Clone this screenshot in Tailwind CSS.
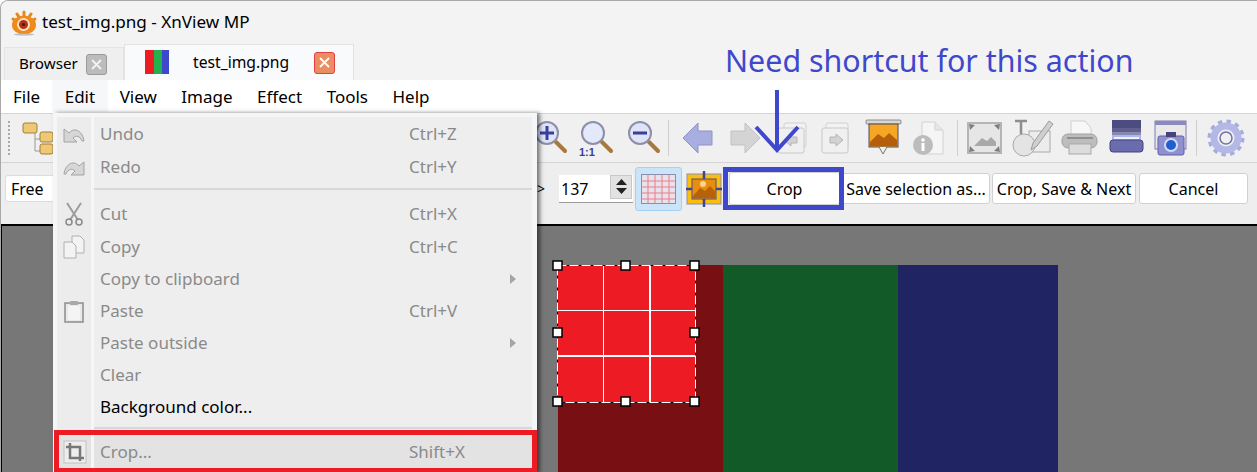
<!DOCTYPE html>
<html lang="en">
<head>
  <meta charset="UTF-8" />
  <title>test_img.png - XnView MP</title>
  <script src="https://cdn.jsdelivr.net/npm/@tailwindcss/browser@4"></script>
</head>
<body class="bg-white">
  <div class="relative w-[1257px] h-[472px] overflow-hidden flex flex-col text-[17px] text-black font-['Noto_Sans',sans-serif] bg-[#f3f3f3] border-l border-t border-[#a9a9a9] rounded-tl-lg">

    <!-- title bar -->
    <div class="h-[43px] shrink-0 flex items-center pl-[10px] gap-[5px] bg-[#f3f3f3]">
      <svg width="26" height="26" viewBox="0 0 26 26">
        <g stroke="#e8861c" stroke-width="3" stroke-linecap="round">
          <path d="M13 2v4M6 4l2 3M20 4l-2 3M2 9l3 2M24 9l-3 2" />
        </g>
        <ellipse cx="13" cy="15" rx="12" ry="9.5" fill="#ee8a1e" />
        <circle cx="12.5" cy="14.5" r="6.5" fill="#fbe3c0" />
        <circle cx="12.5" cy="14.5" r="4.5" fill="#b3301a" />
        <circle cx="12.5" cy="14.5" r="1.6" fill="#5c1208" />
        <ellipse cx="13" cy="24.5" rx="10" ry="1" fill="#bdbdbd" />
      </svg>
      <span class="leading-none mb-[2px] text-[17.1px]">test_img.png - XnView MP</span>
    </div>

    <!-- tabs -->
    <div class="h-[36px] shrink-0 flex items-end pl-[3px]">
      <div class="w-[120px] h-[33px] flex items-center pl-[14px] bg-[#efefef] border border-b-0 border-[#e4e4e4]">
        <span class="w-[67px] mb-[1px] text-[15.2px]">Browser</span>
        <span class="w-[21px] h-[21px] flex items-center justify-center rounded-[3px] bg-[#bcbcbc] border border-[#9a9a9a]">
          <svg width="11" height="11" viewBox="0 0 11 11"><path d="M1 1l9 9M10 1l-9 9" stroke="#f2f2f2" stroke-width="1.8" /></svg>
        </span>
      </div>
      <div class="w-[230px] h-[36px] flex items-center pl-[20px] bg-[#f9fafb] border border-b-0 border-[#e2e2e2]">
        <span class="flex w-[24px] h-[24px] mb-[2px]">
          <span class="w-[9px] bg-[#ed1c24]"></span>
          <span class="w-[8px] bg-[#22b14c]"></span>
          <span class="w-[7px] bg-[#3f48cc]"></span>
        </span>
        <span class="ml-[24px] mt-[1px] w-[121px] text-[15.7px]">test_img.png</span>
        <span class="w-[21px] h-[22px] flex items-center justify-center rounded-[3px] bg-[#ea8d63] border border-[#e0403f]">
          <svg width="11" height="11" viewBox="0 0 11 11"><path d="M1 1l9 9M10 1l-9 9" stroke="#fff" stroke-width="1.8" /></svg>
        </span>
      </div>
    </div>

    <!-- menu bar -->
    <div class="h-[33px] shrink-0 flex items-center bg-white pl-[12px] gap-[24.5px] text-[17px]">
      <span>File</span>
      <span class="relative">
        <span class="absolute left-[-13px] top-[-4px] w-[56px] h-[32px] bg-[#f5f7f9]"></span>
        <span class="relative">Edit</span>
      </span>
      <span>View</span>
      <span>Image</span>
      <span>Effect</span>
      <span>Tools</span>
      <span>Help</span>
    </div>

    <!-- main toolbar -->
    <div class="h-[50px] shrink-0 flex items-center bg-[#f0f0f0] border-t border-b border-[#d4d4d4] pl-[7px]">
      <span class="w-[3px] h-[34px] border-l-2 border-dotted border-[#a8a8a8]"></span>
      <svg class="ml-[10px]" width="32" height="38" viewBox="0 0 32 38">
        <path d="M14 12v20h6M14 20h6" fill="none" stroke="#9a9a9a" />
        <rect x="2" y="4" width="14" height="10" rx="2" fill="#edc877" stroke="#a57f35" />
        <rect x="19" y="13" width="13" height="10" rx="2" fill="#edc877" stroke="#a57f35" />
        <rect x="19" y="25" width="13" height="10" rx="2" fill="#edc877" stroke="#a57f35" />
      </svg>

      <div class="ml-[473px] flex items-center">
        <!-- zoom in -->
        <svg class="w-[46px]" height="38" viewBox="0 0 46 38">
          <path d="M30 23l9 9" stroke="#a8793c" stroke-width="4" stroke-linecap="round" />
          <circle cx="21" cy="14" r="11" fill="#dfe4f8" stroke="#8e8ea8" stroke-width="2" />
          <path d="M14 14h14M21 7v14" stroke="#3a3f9e" stroke-width="3" />
        </svg>
        <!-- zoom 1:1 -->
        <svg class="w-[46px]" height="38" viewBox="0 0 46 38">
          <path d="M30 23l9 9" stroke="#a8793c" stroke-width="4" stroke-linecap="round" />
          <circle cx="21" cy="14" r="11" fill="#e3e8fa" stroke="#8e8ea8" stroke-width="2" />
          <text x="7" y="37" font-family="Liberation Sans" font-weight="700" font-size="11" fill="#3a3f9e">1:1</text>
        </svg>
        <!-- zoom out -->
        <svg class="w-[49px]" height="38" viewBox="0 0 49 38">
          <path d="M31 23l9 9" stroke="#a8793c" stroke-width="4" stroke-linecap="round" />
          <circle cx="22" cy="14" r="11" fill="#dfe4f8" stroke="#8e8ea8" stroke-width="2" />
          <path d="M15 14h14" stroke="#3a3f9e" stroke-width="3" />
        </svg>
        <span class="mx-[1px] w-[1px] h-[36px] bg-[#cfcfcf]"></span>
        <!-- back -->
        <svg class="ml-[5px] w-[47px]" height="34" viewBox="0 0 47 34">
          <path d="M8 17L23 2v8h14v14H23v8z" fill="#a9aee0" stroke="#8f93c4" />
        </svg>
        <!-- forward, disabled -->
        <svg class="w-[46px]" height="34" viewBox="0 0 46 34">
          <path d="M38 17L23 2v8H9v14h14v8z" fill="#d4d4d4" stroke="#c2c2c2" />
        </svg>
        <!-- previous file -->
        <svg class="w-[46px]" height="34" viewBox="0 0 46 34">
          <rect x="16" y="2" width="22" height="24" rx="2" fill="#f2f2f2" stroke="#d0d0d0" />
          <rect x="10" y="7" width="26" height="25" rx="2" fill="#f0f0f0" stroke="#c8c8c8" />
          <path d="M16 19l7-6v3h6v6h-6v3z" fill="#d2d2d2" stroke="#b5b5b5" />
        </svg>
        <!-- next file -->
        <svg class="w-[46px]" height="34" viewBox="0 0 46 34">
          <rect x="12" y="2" width="22" height="24" rx="2" fill="#f2f2f2" stroke="#d0d0d0" />
          <rect x="8" y="7" width="26" height="25" rx="2" fill="#f0f0f0" stroke="#c8c8c8" />
          <path d="M29 19l-7-6v3h-6v6h6v3z" fill="#d2d2d2" stroke="#b5b5b5" />
        </svg>
        <!-- slideshow -->
        <svg class="w-[46px]" height="38" viewBox="0 0 46 38">
          <rect x="6" y="1" width="35" height="4" rx="1" fill="#d8d8d8" stroke="#555" stroke-width="0.6" />
          <rect x="9" y="5" width="29" height="23" fill="#f5a623" stroke="#4b4b66" />
          <path d="M10 23l8-8 6 4 5-5 8 7v6H10z" fill="#b55e0c" />
          <path d="M19 28l4 7 4-7" fill="#eee" stroke="#777" />
        </svg>
        <!-- info, disabled -->
        <svg class="w-[50px]" height="36" viewBox="0 0 50 36">
          <path d="M16 2h13l8 8v24H16z" fill="#f5f5f5" stroke="#d2d2d2" />
          <path d="M29 2v8h8" fill="#e6e6e6" stroke="#d2d2d2" />
          <circle cx="17" cy="25" r="10" fill="#bcbcbc" />
          <circle cx="17" cy="20" r="1.8" fill="#fff" />
          <rect x="15.5" y="23" width="3" height="8" fill="#fff" />
        </svg>
        <span class="mx-[1px] w-[1px] h-[36px] bg-[#cfcfcf]"></span>
        <!-- fit to window -->
        <svg class="ml-[1px] w-[50px]" height="34" viewBox="0 0 50 34">
          <rect x="8" y="2" width="33" height="30" fill="#e6e6e6" stroke="#b5b5b5" stroke-width="2" />
          <path d="M14 25l8-8 5 3 4-4 5 5v4H14z" fill="#a9a9a9" />
          <path d="M9 3l6 1-5 5zM40 3l-6 1 5 5zM9 31l6-1-5-5zM40 31l-6-1 5-5z" fill="#7e7e7e" />
        </svg>
        <!-- draw text -->
        <svg class="w-[47px]" height="38" viewBox="0 0 47 38">
          <rect x="19" y="12" width="21" height="21" fill="#ececec" stroke="#a8a8a8" />
          <circle cx="14" cy="26" r="11" fill="#e4e4e4" stroke="#a8a8a8" />
          <path d="M5 2h12M11 2v13" stroke="#8e8e8e" stroke-width="2.5" />
          <path d="M39 2l4 3-16 22-6 4 2-7z" fill="#cfcfcf" stroke="#9c9c9c" />
        </svg>
        <!-- print -->
        <svg class="w-[50px]" height="36" viewBox="0 0 50 36">
          <path d="M14 1h14l6 7v10H14z" fill="#f7f7f7" stroke="#cfcfcf" />
          <rect x="5" y="14" width="35" height="14" rx="6" fill="#bdbdbd" stroke="#a2a2a2" />
          <rect x="12" y="24" width="22" height="10" fill="#dcdcdc" stroke="#aaa" />
          <rect x="10" y="17" width="26" height="2" fill="#8f8f8f" />
        </svg>
        <!-- scan -->
        <svg class="w-[44px]" height="36" viewBox="0 0 44 36">
          <rect x="5" y="0" width="29" height="8" fill="#4c4c80" />
          <rect x="5" y="8" width="29" height="4" fill="#5f5f90" />
          <rect x="5" y="12" width="29" height="3" fill="#8888b0" />
          <rect x="5" y="15" width="29" height="5" fill="#a9b7ee" />
          <rect x="3" y="20" width="33" height="12" rx="3" fill="#6a6cae" stroke="#44447a" />
          <rect x="7" y="17" width="25" height="2" fill="#e9f2ff" />
        </svg>
        <!-- screen capture -->
        <svg class="w-[44px]" height="38" viewBox="0 0 44 38">
          <rect x="4" y="2" width="31" height="28" fill="#e8e8e8" stroke="#7c7cb0" />
          <rect x="4" y="2" width="31" height="4" fill="#8a8abf" />
          <rect x="7" y="17" width="26" height="19" rx="2" fill="#8f90cf" stroke="#5f60a0" />
          <rect x="15" y="13" width="10" height="5" fill="#44447a" />
          <circle cx="20" cy="26" r="6" fill="#1f5fd0" stroke="#d7dbf5" stroke-width="2" />
        </svg>
        <span class="mx-[1px] w-[1px] h-[36px] bg-[#cfcfcf]"></span>
        <!-- settings -->
        <svg class="ml-[9px]" width="38" height="38" viewBox="0 0 38 38">
          <circle cx="19" cy="19" r="16" fill="none" stroke="#a7acdf" stroke-width="5" stroke-dasharray="4.2 4.18" />
          <circle cx="19" cy="19" r="12" fill="none" stroke="#b4b8e6" stroke-width="7" />
          <circle cx="19" cy="19" r="6" fill="#f0f0f0" stroke="#6e72a8" stroke-width="1.5" />
        </svg>
      </div>
    </div>

    <!-- crop toolbar -->
    <div class="h-[61px] shrink-0 flex items-center bg-[#eeeeee] pl-[4px] pb-[10px]">
      <div class="w-[60px] h-[27px] flex items-center pl-[5px] bg-white border border-[#dcdcdc] rounded-[3px] text-[16px]">Free</div>
      <span class="ml-[472px] w-[22px] text-[14px]">&gt;</span>
      <div class="w-[74px] h-[28px] flex bg-white border-b border-[#9b9b9b] text-[16px]">
        <span class="w-[51px] pl-[2px] leading-[28px]">137</span>
        <span class="w-[22px] h-[24px] flex flex-col items-center justify-center gap-[3px] bg-[#e2e2e2] border border-[#c9c9c9]">
          <svg width="11" height="6" viewBox="0 0 11 6"><path d="M5.500 0L11 6H0z" fill="#222" /></svg>
          <svg width="11" height="6" viewBox="0 0 11 6"><path d="M5.500 6L11 0H0z" fill="#222" /></svg>
        </span>
      </div>
      <div class="ml-[2px] w-[47px] h-[44px] flex items-center justify-center bg-[#cce4f7] border border-[#a4d2f7] rounded-[3px]">
        <svg width="35" height="30" viewBox="0 0 35 30">
          <rect x="0.500" y="0.500" width="34" height="29" fill="#e6e2ee" stroke="#8e8eac" />
          <path d="M7 1v28M14 1v28M21 1v28M28 1v28M1 7h33M1 13h33M1 19h33M1 25h33" stroke="#ec7f85" />
        </svg>
      </div>
      <svg class="ml-[4px]" width="36" height="36" viewBox="0 0 36 36">
        <rect x="1" y="3" width="34" height="30" fill="#fbbe0e" stroke="#8d8db0" />
        <rect x="6" y="8" width="24" height="20" fill="#e98d10" stroke="#4e4e80" />
        <path d="M7 25l7-8 5 3 5-5 5 5v7H7z" fill="#b76208" />
        <circle cx="17" cy="13" r="3" fill="#f8d58a" />
        <path d="M18 0v8M18 28v8M0 18h6M30 18h6" stroke="#3f4596" stroke-width="2.500" />
      </svg>
      <button class="ml-[7px] w-[111px] h-[33px] flex items-center justify-center bg-white border border-[#d0d0d0] rounded-[3px] text-[16px]">Crop</button>
      <button class="ml-[2px] w-[148px] h-[31px] flex items-center justify-center bg-white border border-[#d0d0d0] rounded-[3px] text-[16px] whitespace-nowrap">Save selection as...</button>
      <button class="ml-[2px] w-[144px] h-[31px] flex items-center justify-center bg-white border border-[#d0d0d0] rounded-[3px] text-[16px] whitespace-nowrap">Crop, Save &amp; Next</button>
      <button class="ml-[3px] w-[109px] h-[31px] flex items-center justify-center bg-white border border-[#d0d0d0] rounded-[3px] text-[16px]">Cancel</button>
    </div>

    <!-- image canvas -->
    <div class="relative flex-1 bg-[#777777] border-t-2 border-l border-black">
      <div class="absolute left-[556px] top-[39px] h-[300px] flex">
        <div class="w-[165px] bg-[#780f13]"></div>
        <div class="w-[175px] bg-[#135a29]"></div>
        <div class="w-[160px] bg-[#202463]"></div>
      </div>
      <!-- crop selection -->
      <svg class="absolute left-[549px] top-[33px]" width="152" height="152" viewBox="0 0 152 152">
        <rect x="6.500" y="6.500" width="138" height="137" fill="#ed1c24" stroke="#000" />
        <rect x="6.500" y="6.500" width="138" height="137" fill="none" stroke="#fff" stroke-dasharray="9 3" />
        <path d="M52.500 7v136M7 51.500h137" stroke="#fff" />
        <path d="M99 7v136M7 97h137" stroke="#fff" stroke-width="2" />
        <g fill="#fff" stroke="#000" stroke-width="1.500">
          <rect x="2" y="2" width="9" height="9" />
          <rect x="70" y="2" width="9" height="9" />
          <rect x="139" y="2" width="9" height="9" />
          <rect x="2" y="69" width="9" height="9" />
          <rect x="139" y="69" width="9" height="9" />
          <rect x="2" y="138" width="9" height="9" />
          <rect x="70" y="138" width="9" height="9" />
          <rect x="139" y="138" width="9" height="9" />
        </g>
      </svg>
    </div>

    <!-- edit menu, open over the toolbars -->
    <div class="absolute left-[52px] top-[112px] w-[484px] h-[360px] flex flex-col bg-[#f5f6f7] pt-[4px] text-[#8a8a8a] shadow-[3px_0_4px_rgba(0,0,0,0.5)] text-[17px]">
      <div class="h-[33px] flex">
        <span class="ml-[4px] w-[34px] flex items-center justify-center bg-[#ececec]">
          <svg width="22" height="18" viewBox="0 0 22 18"><path d="M1 4v13h13l-4-4c3-3 7-2 9 3h2C20 7 12 1 6 8z" fill="#d6d6d6" stroke="#a3a3a3" /></svg>
        </span>
        <span class="ml-[3px] w-[438px] flex items-center pl-[6px] bg-[#eeeeee]"><span class="w-[309px]">Undo</span><span>Ctrl+Z</span></span>
      </div>
      <div class="h-[33px] flex">
        <span class="ml-[4px] w-[34px] flex items-center justify-center bg-[#ececec]">
          <svg width="22" height="18" viewBox="0 0 22 18"><path d="M21 4v13H8l4-4c-3-3-7-2-9 3H1C2 7 10 1 16 8z" fill="#d6d6d6" stroke="#a3a3a3" /></svg>
        </span>
        <span class="ml-[3px] w-[438px] flex items-center pl-[6px] bg-[#eeeeee]"><span class="w-[309px]">Redo</span><span>Ctrl+Y</span></span>
      </div>
      <div class="h-[14px] flex">
        <span class="ml-[4px] w-[34px] bg-[#ececec]"></span>
        <span class="ml-[3px] w-[438px] bg-[#eeeeee] pt-[5px]"><span class="block h-[2px] bg-[#d8d8d8]"></span></span>
      </div>
      <div class="h-[34px] flex">
        <span class="ml-[4px] w-[34px] flex items-center justify-center bg-[#ececec]">
          <svg width="20" height="24" viewBox="0 0 20 24"><path d="M3 1l11 17M17 1L6 18" stroke="#9c9c9c" stroke-width="2" /><circle cx="5" cy="20" r="3" fill="none" stroke="#8a8a8a" stroke-width="1.500" /><circle cx="15" cy="20" r="3" fill="none" stroke="#8a8a8a" stroke-width="1.500" /></svg>
        </span>
        <span class="ml-[3px] w-[438px] flex items-center pl-[6px] pb-[1px] bg-[#eeeeee]"><span class="w-[309px]">Cut</span><span>Ctrl+X</span></span>
      </div>
      <div class="h-[32px] flex">
        <span class="ml-[4px] w-[34px] flex items-center justify-center bg-[#ececec]">
          <svg width="22" height="24" viewBox="0 0 22 24"><path d="M9 1h8l4 4v13H9z" fill="#f3f3f3" stroke="#b0b0b0" /><path d="M1 7h8l4 4v12H1z" fill="#f3f3f3" stroke="#b0b0b0" /></svg>
        </span>
        <span class="ml-[3px] w-[438px] flex items-center pl-[6px] bg-[#eeeeee]"><span class="w-[309px]">Copy</span><span>Ctrl+C</span></span>
      </div>
      <div class="h-[32px] flex">
        <span class="ml-[4px] w-[34px] bg-[#ececec]"></span>
        <span class="ml-[3px] w-[438px] flex items-center pl-[6px] bg-[#eeeeee]"><span class="w-[410px]">Copy to clipboard</span>
          <svg width="6" height="10" viewBox="0 0 6 10"><path d="M0 0l6 5-6 5z" fill="#a5a5a5" /></svg>
        </span>
      </div>
      <div class="h-[32px] flex">
        <span class="ml-[4px] w-[34px] flex items-center justify-center bg-[#ececec]">
          <svg width="20" height="23" viewBox="0 0 20 23"><rect x="1" y="3" width="18" height="19" fill="#e8e8e8" stroke="#8c8c8c" stroke-width="1.500" /><rect x="4" y="6" width="12" height="14" fill="#f4f4f4" /><rect x="6" y="1" width="8" height="4" rx="1" fill="#a9a9a9" /></svg>
        </span>
        <span class="ml-[3px] w-[438px] flex items-center pl-[6px] bg-[#eeeeee]"><span class="w-[309px]">Paste</span><span>Ctrl+V</span></span>
      </div>
      <div class="h-[32px] flex">
        <span class="ml-[4px] w-[34px] bg-[#ececec]"></span>
        <span class="ml-[3px] w-[438px] flex items-center pl-[6px] bg-[#eeeeee]"><span class="w-[410px]">Paste outside</span>
          <svg width="6" height="10" viewBox="0 0 6 10"><path d="M0 0l6 5-6 5z" fill="#a5a5a5" /></svg>
        </span>
      </div>
      <div class="h-[32px] flex">
        <span class="ml-[4px] w-[34px] bg-[#ececec]"></span>
        <span class="ml-[3px] w-[438px] flex items-center pl-[6px] bg-[#eeeeee]">Clear</span>
      </div>
      <div class="h-[32px] flex">
        <span class="ml-[4px] w-[34px] bg-[#ececec]"></span>
        <span class="ml-[3px] w-[438px] flex items-center pl-[6px] bg-[#eeeeee] text-black">Background color...</span>
      </div>
      <div class="h-[7px] flex">
        <span class="ml-[4px] w-[34px] bg-[#ececec]"></span>
        <span class="ml-[3px] w-[438px] bg-[#eeeeee] pt-[4px]"><span class="block h-[2px] bg-[#d8d8d8]"></span></span>
      </div>
      <!-- highlighted crop entry -->
      <div class="ml-[1px] h-[43px] w-[483px] flex border-[5px] border-[#ed1c24] bg-[#f5f6f7]">
        <span class="w-[32px] flex items-center justify-center bg-[#e3e3e3]">
          <svg width="24" height="24" viewBox="0 0 24 24"><rect x="1" y="1" width="22" height="22" fill="#ededed" stroke="#c2c2c2" /><path d="M7 3v15h14M3 7h14v14" fill="none" stroke="#777" stroke-width="2.500" /></svg>
        </span>
        <span class="ml-[3px] flex-1 flex items-center pl-[6px] bg-[#e3e3e3]"><span class="w-[309px]">Crop...</span><span>Shift+X</span></span>
      </div>
    </div>

    <!-- annotation drawn on top of the screenshot -->
    <div class="absolute left-[724px] top-[39px] text-[30.4px] leading-[42px] text-[#3f48cc] whitespace-nowrap">Need shortcut for this action</div>
    <svg class="absolute left-[752px] top-[87px]" width="48" height="66" viewBox="0 0 48 66">
      <path d="M24 2v60M3 39l21 23 21-23" fill="none" stroke="#3f48cc" stroke-width="4" />
    </svg>
    <div class="absolute left-[722px] top-[166px] w-[121px] h-[43px] border-[5px] border-[#3f48cc]"></div>
  </div>
</body>
</html>
